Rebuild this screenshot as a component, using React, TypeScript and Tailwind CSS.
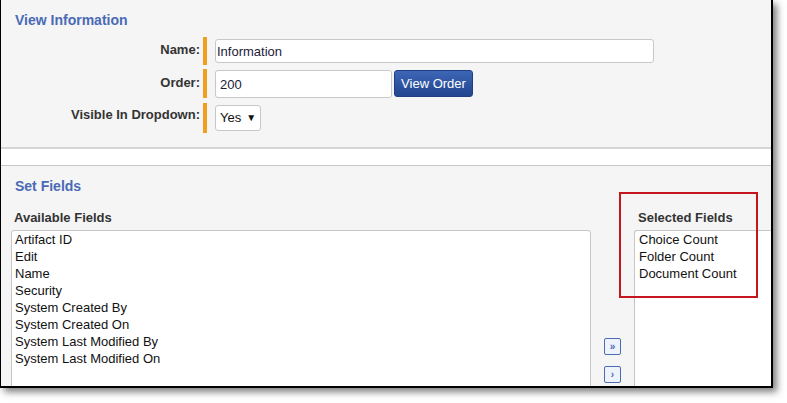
import React from "react";

const available = [
  "Artifact ID",
  "Edit",
  "Name",
  "Security",
  "System Created By",
  "System Created On",
  "System Last Modified By",
  "System Last Modified On",
];
const selected = ["Choice Count", "Folder Count", "Document Count"];

export default function App() {
  return (
    <div className="w-[787px] h-[403px] bg-white font-['Liberation_Sans',Arial,sans-serif]">
      <div className="relative w-[773px] h-[388px] border-l border-r-2 border-b-2 border-black bg-[#f5f5f5] shadow-[4px_4px_7px_rgba(0,0,0,0.5)] overflow-hidden flex flex-col">
        {/* Top section */}
        <div className="h-[149px] shrink-0 border-b-2 border-[#d6d6d6] pt-[12px]">
          <div className="pl-[14px] text-[14px] leading-[17px] font-bold text-[#4a6ab6]">View Information</div>
          <div className="mt-[8px] flex flex-col">
            {/* Name */}
            <div className="flex h-[28px]">
              <div className="w-[199px] pt-[5px] text-right text-[13px] leading-[15px] font-bold text-[#333]">Name:</div>
              <div className="ml-[3px] w-[4px] bg-[#f0a01e]" />
              <div className="ml-[8px] mt-[2px] h-[24px] w-[439px] rounded-[3px] border border-[#c8c8c8] bg-white pl-[1px] text-[13px] leading-[23px] text-[#1b1b3a]">
                Information
              </div>
            </div>
            {/* Order */}
            <div className="mt-[4px] flex h-[29px]">
              <div className="w-[199px] pt-[6px] text-right text-[13px] leading-[15px] font-bold text-[#333]">Order:</div>
              <div className="ml-[3px] w-[4px] bg-[#f0a01e]" />
              <div className="ml-[8px] mt-[1px] h-[28px] w-[177px] rounded-[3px] border border-[#c8c8c8] bg-white pl-[4px] text-[13px] leading-[27px] text-[#1b1b3a]">
                200
              </div>
              <div className="ml-[2px] mt-[1px] flex h-[27px] w-[79px] items-center justify-center rounded-[3px] border border-[#1f3f82] bg-gradient-to-b from-[#3d66b6] to-[#22468f] text-[13px] text-white">
                View Order
              </div>
            </div>
            {/* Visible */}
            <div className="mt-[5px] flex h-[30px]">
              <div className="w-[199px] pt-[4px] text-right text-[13px] leading-[15px] font-bold text-[#333]">Visible In Dropdown:</div>
              <div className="ml-[3px] w-[4px] bg-[#f0a01e]" />
              <div className="ml-[8px] mt-[2px] flex h-[26px] w-[46px] items-center rounded-[3px] border border-[#c8c8c8] bg-white pl-[4px] text-[13px] text-[#111]">
                <span>Yes</span>
                <span className="ml-[5px] text-[10px] leading-none">▼</span>
              </div>
            </div>
          </div>
        </div>
        {/* White strip */}
        <div className="h-[17px] shrink-0 border-b border-[#c8c8c8] bg-white" />
        {/* Bottom section */}
        <div className="flex-1 pt-[12px]">
          <div className="pl-[14px] text-[14px] leading-[17px] font-bold text-[#4a6ab6]">Set Fields</div>
          <div className="mt-[15px] flex">
            <div className="ml-[10px] w-[580px] shrink-0">
              <div className="pl-[3px] text-[13px] leading-[15px] font-bold text-[#333]">Available Fields</div>
              <div className="mt-[5px] h-[200px] rounded-t-[3px] border border-[#c6c6c6] bg-white pl-[3px] text-[13px] leading-[17px] text-[#111]">
                {available.map((f) => (
                  <div key={f}>{f}</div>
                ))}
              </div>
            </div>
            <div className="w-[43px] shrink-0 pl-[13px] pt-[128px]">
              <div className="flex h-[17px] w-[17px] items-center justify-center rounded-[2px] border border-[#4a6cb5] bg-[#eef2fa] text-[10px] font-bold leading-none text-[#4a6cb5]">
                »
              </div>
              <div className="mt-[11px] flex h-[17px] w-[17px] items-center justify-center rounded-[2px] border border-[#4a6cb5] bg-[#eef2fa] text-[10px] font-bold leading-none text-[#4a6cb5]">
                ›
              </div>
            </div>
            <div className="flex-1">
              <div className="pl-[4px] text-[13px] leading-[15px] font-bold text-[#333]">Selected Fields</div>
              <div className="mt-[5px] h-[200px] w-[200px] rounded-tl-[3px] border-l border-t border-[#c6c6c6] bg-white pl-[4px] text-[13px] leading-[17px] text-[#111]">
                {selected.map((f) => (
                  <div key={f}>{f}</div>
                ))}
              </div>
            </div>
          </div>
        </div>
        {/* Red annotation */}
        <div className="absolute left-[618px] top-[192px] h-[106px] w-[139px] border-2 border-[#c4161c]" />
      </div>
    </div>
  );
}
